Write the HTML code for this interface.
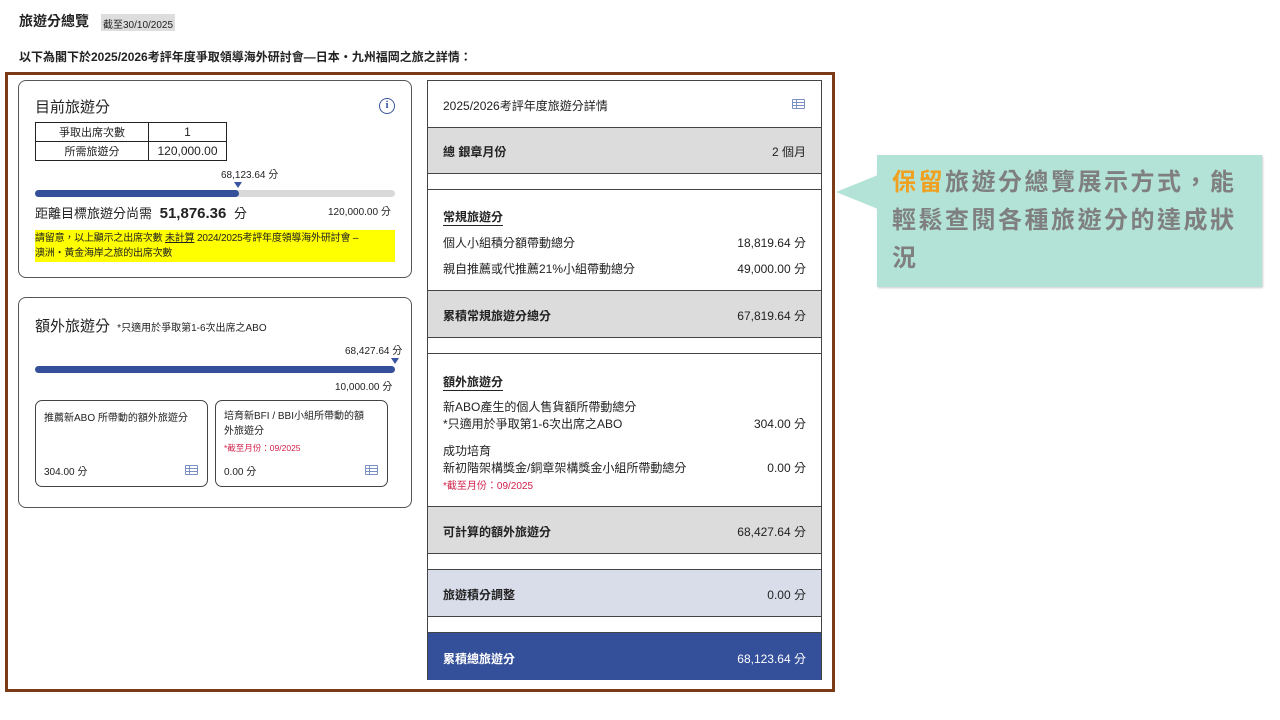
<!DOCTYPE html>
<html><head><meta charset="utf-8"><style>
*{margin:0;padding:0;box-sizing:border-box}
body{width:1280px;height:720px;background:#fff;position:relative;font-family:"Liberation Sans","Noto Sans CJK TC",sans-serif;color:#222;overflow:hidden}
.a{position:absolute;white-space:nowrap}
.card{position:absolute;border:1.5px solid #555;border-radius:8px;background:#fff}
.sub{position:absolute;border:1.5px solid #444;border-radius:7px}
.row{position:absolute;left:0;right:0;border-top:1px solid #444}
.ico{position:absolute;width:13px;height:10px;border:1.3px solid #7a8fc4;border-radius:1px}
.ico:before{content:"";position:absolute;left:0;right:0;top:2px;height:2px;border-top:1px solid #7a8fc4;border-bottom:1px solid #7a8fc4}
.ico:after{content:"";position:absolute;left:3px;top:0;bottom:0;border-left:1px solid #7a8fc4}
</style></head><body>
<div class="a" style="left:19px;top:11px;font-size:14px;font-weight:bold">旅遊分總覽</div>
<div class="a" style="left:101px;top:14px;height:17px;padding:2px 2px;background:#ddd;font-size:10px">截至30/10/2025</div>
<div class="a" style="left:19px;top:48px;font-size:12px;font-weight:bold">以下為閣下於2025/2026考評年度爭取領導海外研討會—日本・九州福岡之旅之詳情：</div>

<div style="position:absolute;left:5px;top:72px;width:830px;height:620px;border:3px solid #7a3a16"></div>

<div class="card" style="left:18px;top:80px;width:394px;height:198px"></div>
<div class="a" style="left:35px;top:96px;font-size:15px">目前旅遊分</div>
<div class="a" style="left:379px;top:98px;width:16px;height:16px;border:1.5px solid #3a55a0;border-radius:50%;color:#3a55a0;font-size:11px;font-weight:bold;text-align:center;line-height:13px;font-family:'Liberation Serif',serif">i</div>
<table style="position:absolute;left:35px;top:122px;border-collapse:collapse;font-size:11px;text-align:center">
<tr><td style="border:1px solid #222;width:113px;height:19px">爭取出席次數</td><td style="border:1px solid #222;width:78px;font-size:12px">1</td></tr>
<tr><td style="border:1px solid #222;height:19px">所需旅遊分</td><td style="border:1px solid #222;font-size:12px">120,000.00</td></tr>
</table>
<div class="a" style="left:221px;top:166px;font-size:10px">68,123.64 分</div>
<div class="a" style="left:234px;top:182px;width:0;height:0;border-left:4px solid transparent;border-right:4px solid transparent;border-top:6px solid #3a55a0"></div>
<div class="a" style="left:35px;top:190px;width:360px;height:7px;border-radius:4px;background:#d9d9d9"></div>
<div class="a" style="left:35px;top:190px;width:204px;height:7px;border-radius:4px;background:#34509a"></div>
<div class="a" style="left:35px;top:203px;font-size:13px">距離目標旅遊分尚需 <b style="font-size:15px;margin:0 4px">51,876.36</b> 分</div>
<div class="a" style="left:328px;top:203px;font-size:10px">120,000.00 分</div>
<div class="a" style="left:35px;top:230px;width:360px;height:32px;background:#ffff00;font-size:10px;line-height:15px;padding:1px 0;white-space:normal;letter-spacing:-0.2px">請留意，以上顯示之出席次數 <u>未計算</u> 2024/2025考評年度領導海外研討會 –<br>澳洲・黃金海岸之旅的出席次數</div>

<div class="card" style="left:18px;top:297px;width:394px;height:211px"></div>
<div class="a" style="left:35px;top:315px;font-size:15px">額外旅遊分 <span style="font-size:10px;margin-left:3px">*只適用於爭取第1-6次出席之ABO</span></div>
<div class="a" style="left:345px;top:342px;font-size:10px">68,427.64 分</div>
<div class="a" style="left:391px;top:358px;width:0;height:0;border-left:4px solid transparent;border-right:4px solid transparent;border-top:6px solid #3a55a0"></div>
<div class="a" style="left:35px;top:366px;width:360px;height:7px;border-radius:4px;background:#34509a"></div>
<div class="a" style="left:335px;top:378px;font-size:10px">10,000.00 分</div>
<div class="sub" style="left:35px;top:400px;width:173px;height:87px"></div>
<div class="a" style="left:44px;top:409px;font-size:10px">推薦新ABO 所帶動的額外旅遊分</div>
<div class="a" style="left:44px;top:463px;font-size:10px">304.00 分</div>
<div class="ico" style="left:185px;top:465px"></div>
<div class="sub" style="left:215px;top:400px;width:173px;height:87px"></div>
<div class="a" style="left:224px;top:409px;font-size:10px;line-height:15px">培育新BFI / BBI小組所帶動的額<br>外旅遊分</div>
<div class="a" style="left:224px;top:442px;font-size:8.5px;color:#d0204a">*截至月份：09/2025</div>
<div class="a" style="left:224px;top:463px;font-size:10px">0.00 分</div>
<div class="ico" style="left:365px;top:465px"></div>

<div style="position:absolute;left:427px;top:80px;width:395px;height:600px;border:1px solid #444;font-size:12px">
<div class="a" style="left:15px;top:16px">2025/2026考評年度旅遊分詳情</div>
<div class="ico" style="left:364px;top:18px"></div>
<div class="row" style="top:46px;height:47px;background:#dcdcdc"><span class="a" style="left:15px;top:15px;font-weight:bold">總 銀章月份</span><span class="a" style="right:15px;top:15px">2 個月</span></div>
<div class="row" style="top:92px;height:17px"></div>
<div class="row" style="top:108px;height:102px">
<span class="a" style="left:15px;top:18px;font-weight:bold;border-bottom:1px solid #222">常規旅遊分</span>
<span class="a" style="left:15px;top:44px">個人小組積分額帶動總分</span><span class="a" style="right:15px;top:44px">18,819.64 分</span>
<span class="a" style="left:15px;top:70px">親自推薦或代推薦21%小組帶動總分</span><span class="a" style="right:15px;top:70px">49,000.00 分</span></div>
<div class="row" style="top:209px;height:48px;background:#dcdcdc"><span class="a" style="left:15px;top:16px;font-weight:bold">累積常規旅遊分總分</span><span class="a" style="right:15px;top:16px">67,819.64 分</span></div>
<div class="row" style="top:256px;height:17px"></div>
<div class="row" style="top:272px;height:154px">
<span class="a" style="left:15px;top:19px;font-weight:bold;border-bottom:1px solid #222">額外旅遊分</span>
<span class="a" style="left:15px;top:44px">新ABO產生的個人售貨額所帶動總分</span>
<span class="a" style="left:15px;top:61px">*只適用於爭取第1-6次出席之ABO</span><span class="a" style="right:15px;top:61px">304.00 分</span>
<span class="a" style="left:15px;top:88px">成功培育</span>
<span class="a" style="left:15px;top:105px">新初階架構獎金/銅章架構獎金小組所帶動總分</span><span class="a" style="right:15px;top:105px">0.00 分</span>
<span class="a" style="left:15px;top:123px;font-size:10px;color:#d0204a">*截至月份：09/2025</span></div>
<div class="row" style="top:425px;height:48px;background:#dcdcdc"><span class="a" style="left:15px;top:16px;font-weight:bold">可計算的額外旅遊分</span><span class="a" style="right:15px;top:16px">68,427.64 分</span></div>
<div class="row" style="top:472px;height:17px"></div>
<div class="row" style="top:488px;height:48px;background:#d8dde9"><span class="a" style="left:15px;top:16px;font-weight:bold">旅遊積分調整</span><span class="a" style="right:15px;top:16px">0.00 分</span></div>
<div class="row" style="top:535px;height:17px"></div>
<div class="row" style="top:551px;height:48px;background:#35509a;color:#fff"><span class="a" style="left:15px;top:17px;font-weight:bold">累積總旅遊分</span><span class="a" style="right:15px;top:17px">68,123.64 分</span></div>
</div>

<div class="a" style="left:836px;top:175px;width:0;height:0;border-top:17px solid transparent;border-bottom:17px solid transparent;border-right:42px solid #b3e3d6"></div>
<div class="a" style="left:877px;top:155px;width:385px;height:132px;background:#b3e3d6;box-shadow:1px 1px 2px #ccc"></div>
<div class="a" style="left:892px;top:164px;width:352px;font-size:24px;line-height:38px;color:#7f7f7f;font-weight:bold;white-space:normal;letter-spacing:2.5px"><span style="color:#f0a020">保留</span>旅遊分總覽展示方式，能輕鬆查閱各種旅遊分的達成狀況</div>
</body></html>
